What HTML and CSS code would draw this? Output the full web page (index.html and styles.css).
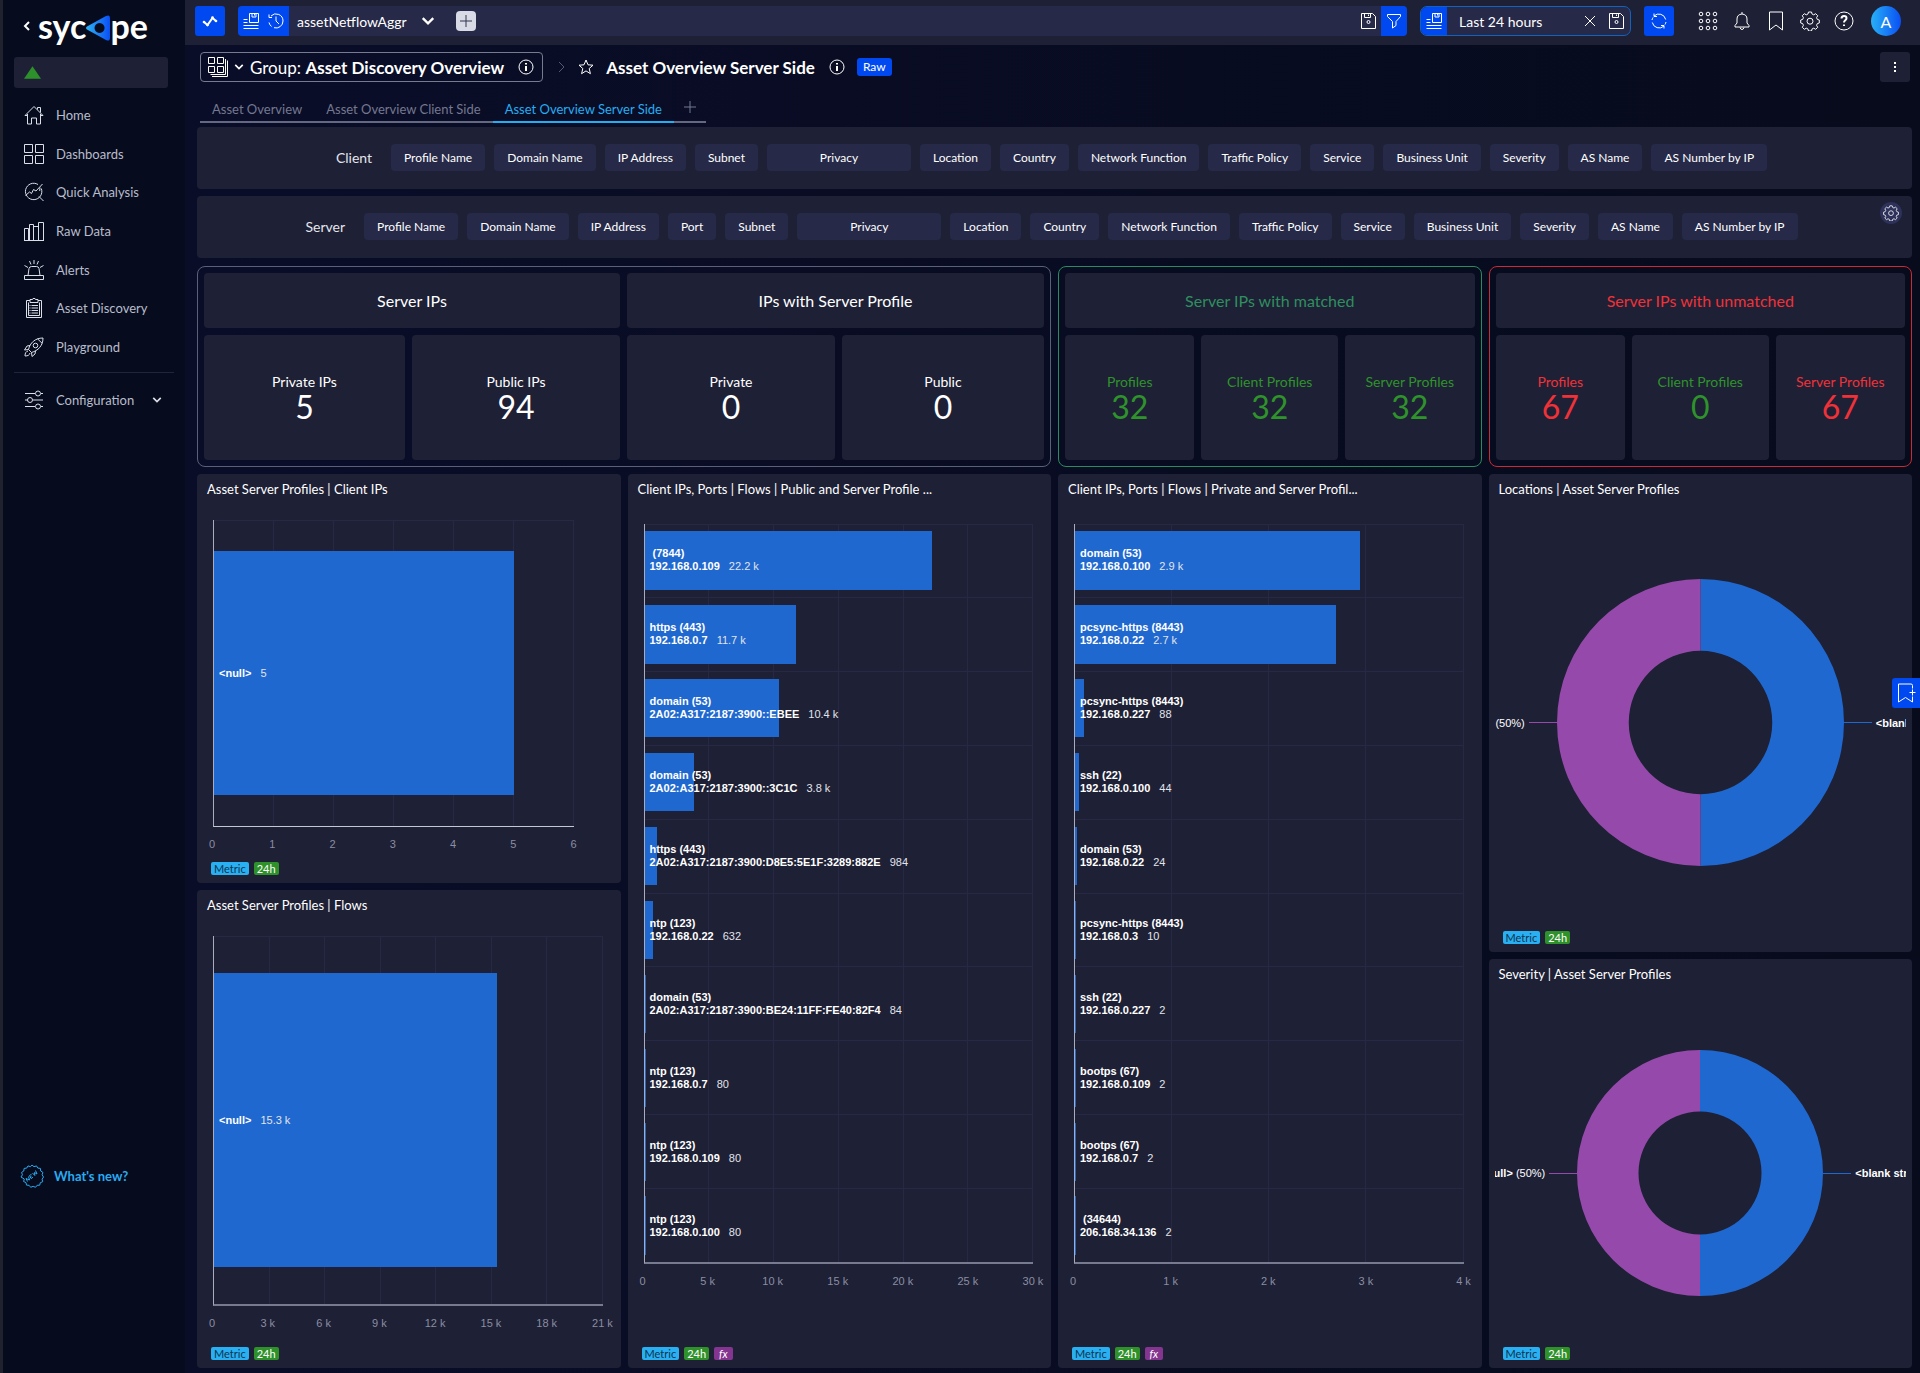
FILE: index.html
```html
<!DOCTYPE html>
<html lang="en">
<head>
<meta charset="UTF-8">
<meta name="viewport" content="width=device-width, initial-scale=1.0">
<title>Asset Overview Server Side</title>
<link rel="stylesheet" href="styles.css">
</head>
<body>

<!-- icon sprite -->
<svg class="sprite" aria-hidden="true">
    <symbol id="i-home" viewBox="0 0 20 20"><path d="M1 10.5 10 1.5l9 9M1 10.5h2.5M19 10.5h-2.5M3.5 9v10h4v-6h5v6h4V9M13.5 4.500V2.500h3v5"/></symbol>
    <symbol id="i-dash" viewBox="0 0 20 20"><path d="M.5.5h8v8h-8zM11.500.5h8v8h-8zM.5 11.500h8v8h-8zM11.500 11.500h8v8h-8z"/></symbol>
    <symbol id="i-analysis" viewBox="0 0 20 20"><path d="M17.300 6.500a8.200 8.200 0 1 1-3.300-4M15 14.500l4.500 4.500M1.500 13.500l4-3.500 2 1.500 2-4 2.500 1.500L18.500 2M16 5.500l-.3 3.500"/></symbol>
    <symbol id="i-raw" viewBox="0 0 20 20"><path d="M0 19.500h20M.5 19V7.500h4V19M5.500 19V3.500h4V19M9.500 5.500h5V19M14.500 19V1.500h5V19"/></symbol>
    <symbol id="i-alert" viewBox="0 0 20 20"><path d="M.5 15.500h19v4H.5zM4 15.500l1-7q.5-2 2.500-2h5q2 0 2.500 2l1 7M10 0v4M5.500 1l1.500 3.500M14.500 1 13 4.500M.5 5.500 4 7.500M19.500 5.500 16 7.500"/></symbol>
    <symbol id="i-clip" viewBox="0 0 20 20"><path d="M6 2.500H2.500v17h15v-17H14M6 1.500h2.500L9 .5h2l.5 1H14v3H6zM4.500 4.500v13h11v-13M7.500 7.500h6.500M7.500 10h6.500M7.500 12.500h6.500M7.500 15h6.500M5.500 7.500h1M5.500 10h1M5.500 12.500h1M5.500 15h1"/></symbol>
    <symbol id="i-rocket" viewBox="0 0 20 20"><path d="M4.500 12.500C6 6 11 1 19 1c0 8-5 12.500-11.500 14.500zM13.500 1.800l4.800 4.700M6 8.500 3 9l-2.500 4 4-.5M11.500 14l-.5 3-3 2.500-.5-4M4 14c-2 .5-3 2-3 5 3 0 4.500-1 5-3"/><circle cx="11.500" cy="8.500" r="2.300"/></symbol>
    <symbol id="i-sliders" viewBox="0 0 20 20"><path d="M1 3.500h10M17 3.500h2M1 10h2.500M9 10h10M1 16.500h10M17 16.500h2"/><circle cx="14" cy="3.500" r="2.500"/><circle cx="6" cy="10" r="2.500"/><circle cx="14" cy="16.500" r="2.500"/></symbol>
    <symbol id="i-down" viewBox="0 0 12 12"><path d="M1.500 3.500 6 8l4.500-4.500"/></symbol>
    <symbol id="i-left" viewBox="0 0 12 12"><path d="M8 2 4 6l4 4"/></symbol>
    <symbol id="i-right" viewBox="0 0 12 12"><path d="m4 1 5 5-5 5"/></symbol>
    <symbol id="i-spark" viewBox="0 0 16 16"><path d="m2 9 3.500 3L10.500 5l3.500 3"/><circle class="dot" cx="2" cy="9" r="1.300"/><circle class="dot" cx="5.500" cy="12" r="1.300"/><circle class="dot" cx="10.500" cy="4.500" r="1.300"/><circle class="dot" cx="14" cy="8" r="1.300"/></symbol>
    <symbol id="i-saved" viewBox="0 0 16 16"><path d="M6.500.5h9v9h-9zM9 .5v3.500h4V.5M11.500 1v1.500M.5 6.500h4M.5 9.500h4M.5 12.500h15M.5 15.500h15"/></symbol>
    <symbol id="i-history" viewBox="0 0 16 16"><path d="M3 3a7 7 0 0 1 12 5 7 7 0 0 1-9 6.700M1 9.500A7 7 0 0 0 3.500 13.500M1 1.500v3h3M8 3.500V8l3 3"/></symbol>
    <symbol id="i-disk" viewBox="0 0 16 16"><path d="M1.500.5h11l3 3v12h-14zM4.500.5v4h6v-4M8.500 1.500v1.500"/><circle cx="8.500" cy="9" r="1.500"/></symbol>
    <symbol id="i-filter" viewBox="0 0 16 16"><path d="M1.500 1.500h13v2L10 8.500v4L6.500 15V8.500l-5-5z"/></symbol>
    <symbol id="i-close" viewBox="0 0 12 12"><path d="m1 1 10 10M11 1 1 11"/></symbol>
    <symbol id="i-refresh" viewBox="0 0 16 16"><path d="M3 3a7 7 0 0 1 11.700 3.500M13 13A7 7 0 0 1 1.300 9.500M1 7a7 7 0 0 1 1-2.500M15 9a7 7 0 0 1-1 2.500M3 .5V3.500h3M13 15.500v-3h-3"/></symbol>
    <symbol id="i-apps" viewBox="0 0 20 20"><circle cx="3" cy="3" r="1.800"/><circle cx="10" cy="3" r="1.800"/><circle cx="17" cy="3" r="1.800"/><circle cx="3" cy="10" r="1.800"/><circle cx="10" cy="10" r="1.800"/><circle cx="17" cy="10" r="1.800"/><circle cx="3" cy="17" r="1.800"/><circle cx="10" cy="17" r="1.800"/><circle cx="17" cy="17" r="1.800"/></symbol>
    <symbol id="i-bell" viewBox="0 0 20 20"><path d="M3 16h14v-1.500l-2-2.500V8q0-4.500-5-5-5 .5-5 5v4l-2 2.500zM10 3V1M8 16.500q.5 2 2 2t2-2"/></symbol>
    <symbol id="i-mark" viewBox="0 0 20 20"><path d="M3.500 1h13v18L10 14l-6.500 5z"/></symbol>
    <symbol id="i-markplus" viewBox="0 0 20 20"><path d="M16.500 5.500V2.500q0-1.500-1.500-1.500H2.500v18l7-4.500 7 4.500v-5.500M16.500 6.500v6M13.500 9.500h6"/></symbol>
    <symbol id="i-gear" viewBox="0 0 20 20"><path d="M8.500 1h3l.6 2.100 1.600.7 2-1.100 2 2-1.100 2 .7 1.700 2 .6v3l-2 .6-.7 1.700 1.100 2-2 2-2-1.100-1.600.7-.6 2.100h-3l-.6-2.100-1.600-.7-2 1.100-2-2 1.100-2-.7-1.700-2-.6V9l2-.6.7-1.700-1.100-2 2-2 2 1.100 1.600-.7z"/><circle cx="10" cy="10.200" r="3"/></symbol>
    <symbol id="i-help" viewBox="0 0 20 20"><circle cx="10" cy="10" r="9"/><path class="thick" d="M7.500 7.500q0-2.500 2.500-2.500t2.500 2.300c0 2-2.500 2-2.500 4.200M10 13.500V15"/></symbol>
    <symbol id="i-info" viewBox="0 0 16 16"><circle cx="8" cy="8" r="7"/><path class="thick" d="M8 7v5M8 4v1.500"/></symbol>
    <symbol id="i-star" viewBox="0 0 16 16"><path d="m8 1 2 4.800 5 .4-3.800 3.300 1.200 5.200L8 11.900l-4.400 2.800 1.200-5.200L1 6.200l5-.4z"/></symbol>
    <symbol id="i-group" viewBox="0 0 20 20"><path d="M.5.5h6v6h-6zM9.500.5h6v6h-6zM.5 9.500h6v6h-6zM9.500 9.500h6v6h-6zM17.500 2v15.500H2.500M19.500 3.500v16H4"/></symbol>
    <symbol id="i-plus" viewBox="0 0 12 12"><path d="M6 0v12M0 6h12"/></symbol>
    <symbol id="i-new" viewBox="0 0 24 24"><path d="m12 1 2 1.700 2.500-.8 1.300 2.200 2.600.3.300 2.600 2.200 1.400-.8 2.400L23.500 13l-1.400 2.200.6 2.500-2.400 1-.6 2.500-2.600.1-1.600 2-2.400-1-2.400 1-1.600-2-2.600-.2-.5-2.500-2.400-1.100.7-2.500L1 13l1.400-2.200-.8-2.400 2.200-1.400.3-2.600 2.600-.3L8 1.900l2.500.8z"/><path d="m7.500 17.500-1.500-3 3.500 1.500-1-3.500M11 14.500l-1.500-3 2-1.200M10.300 13l1.200-.8M11 14.500l2-1.200M12.500 9l2.300 2.500-.3-3 2.500 1.500-1.500-3.500"/></symbol>
</svg>

<div class="app">
    <aside class="sidebar">
        <div class="brand">
            <button class="plain" aria-label="Collapse menu"><svg class="icon s12 bold"><use href="#i-left"/></svg></button>
            <a class="logo" href="#" aria-label="sycope">
                <span>syc</span>
                <svg class="logo-mark" viewBox="0 0 24 26">
                    <defs><linearGradient id="brandFill" x1="0" x2="1"><stop offset="0" stop-color="#2cb4f5"/><stop offset="1" stop-color="#0a4ff5"/></linearGradient></defs>
                    <path fill="url(#brandFill)" fill-rule="evenodd" d="M1 11.500 20 1q4-2 4 2.500v19q0 4.500-4 2.500L1 14.500q-2-1.500 0-3zM13.500 8a5 5 0 1 0 .1 0z"/>
                </svg>
                <span>pe</span>
            </a>
        </div>
        <div class="status"><svg viewBox="0 0 18 13"><path d="M9 0l9 13H0z"/></svg></div>
        <nav class="menu primary">
            <a href="#"><svg class="icon s20"><use href="#i-home"/></svg>Home</a>
            <a href="#"><svg class="icon s20"><use href="#i-dash"/></svg>Dashboards</a>
            <a href="#"><svg class="icon s20"><use href="#i-analysis"/></svg>Quick Analysis</a>
            <a href="#"><svg class="icon s20"><use href="#i-raw"/></svg>Raw Data</a>
            <a href="#"><svg class="icon s20"><use href="#i-alert"/></svg>Alerts</a>
            <a href="#"><svg class="icon s20"><use href="#i-clip"/></svg>Asset Discovery</a>
            <a href="#"><svg class="icon s20"><use href="#i-rocket"/></svg>Playground</a>
        </nav>
        <nav class="menu config">
            <a href="#"><svg class="icon s20"><use href="#i-sliders"/></svg>Configuration<svg class="icon s10 bold arrow"><use href="#i-down"/></svg></a>
        </nav>
        <a class="whats-new" href="#"><svg class="icon s24"><use href="#i-new"/></svg>What's new?</a>
    </aside>

    <div class="main">
        <header class="topbar">
            <button class="square" aria-label="Activity"><svg class="icon s16 bold"><use href="#i-spark"/></svg></button>
            <div class="search">
                <div class="search-icons">
                    <button class="plain" aria-label="Saved filters"><svg class="icon s16"><use href="#i-saved"/></svg></button>
                    <button class="plain" aria-label="History"><svg class="icon s16"><use href="#i-history"/></svg></button>
                </div>
                <label class="source">
                    <select aria-label="Data source"><option>assetNetflowAggr</option></select>
                    <svg class="icon s14 bold"><use href="#i-down"/></svg>
                </label>
                <button class="add-filter" aria-label="Add filter"><svg class="icon s12"><use href="#i-plus"/></svg></button>
                <button class="plain save" aria-label="Save filter"><svg class="icon s16"><use href="#i-disk"/></svg></button>
                <button class="filter" aria-label="Filter"><svg class="icon s16"><use href="#i-filter"/></svg></button>
            </div>
            <div class="time">
                <button class="time-saved" aria-label="Saved ranges"><svg class="icon s16"><use href="#i-saved"/></svg></button>
                <input type="text" aria-label="Time range" value="Last 24 hours">
                <button class="plain" aria-label="Clear"><svg class="icon s12"><use href="#i-close"/></svg></button>
                <button class="plain" aria-label="Save range"><svg class="icon s16"><use href="#i-disk"/></svg></button>
            </div>
            <button class="square" aria-label="Refresh"><svg class="icon s16"><use href="#i-refresh"/></svg></button>
            <div class="tools">
                <button class="plain" aria-label="Apps"><svg class="icon s20"><use href="#i-apps"/></svg></button>
                <button class="plain" aria-label="Notifications"><svg class="icon s20"><use href="#i-bell"/></svg></button>
                <button class="plain" aria-label="Bookmarks"><svg class="icon s20"><use href="#i-mark"/></svg></button>
                <button class="plain" aria-label="Settings"><svg class="icon s20"><use href="#i-gear"/></svg></button>
                <button class="plain" aria-label="Help"><svg class="icon s20"><use href="#i-help"/></svg></button>
            </div>
            <button class="avatar">A</button>
        </header>

        <main class="content">
            <div class="heading">
                <button class="group">
                    <svg class="icon s20"><use href="#i-group"/></svg>
                    <svg class="icon s10 bold"><use href="#i-down"/></svg>
                    <span>Group: <b>Asset Discovery Overview</b></span>
                    <svg class="icon s16"><use href="#i-info"/></svg>
                </button>
                <svg class="icon s12 sep"><use href="#i-right"/></svg>
                <svg class="icon s16"><use href="#i-star"/></svg>
                <h1>Asset Overview Server Side</h1>
                <svg class="icon s16"><use href="#i-info"/></svg>
                <span class="raw">Raw</span>
                <button class="more" aria-label="More"><i></i><i></i><i></i></button>
            </div>

            <nav class="tabs">
                <a href="#">Asset Overview</a>
                <a href="#">Asset Overview Client Side</a>
                <a href="#" class="active">Asset Overview Server Side</a>
                <button class="plain" aria-label="Add tab"><svg class="icon s12"><use href="#i-plus"/></svg></button>
            </nav>

            <section class="card filters">
                <h2>Client</h2>
                <button>Profile Name</button>
                <button>Domain Name</button>
                <button>IP Address</button>
                <button>Subnet</button>
                <button class="wide">Privacy</button>
                <button>Location</button>
                <button>Country</button>
                <button>Network Function</button>
                <button>Traffic Policy</button>
                <button>Service</button>
                <button>Business Unit</button>
                <button>Severity</button>
                <button>AS Name</button>
                <button>AS Number by IP</button>
            </section>

            <section class="card filters">
                <h2>Server</h2>
                <button>Profile Name</button>
                <button>Domain Name</button>
                <button>IP Address</button>
                <button>Port</button>
                <button>Subnet</button>
                <button class="wide">Privacy</button>
                <button>Location</button>
                <button>Country</button>
                <button>Network Function</button>
                <button>Traffic Policy</button>
                <button>Service</button>
                <button>Business Unit</button>
                <button>Severity</button>
                <button>AS Name</button>
                <button>AS Number by IP</button>
                <button class="settings" aria-label="Panel settings"><svg class="icon s16"><use href="#i-gear"/></svg></button>
            </section>

            <div class="kpis">
                <section class="kpi-group four">
                    <h2 class="card span2">Server IPs</h2>
                    <h2 class="card span2">IPs with Server Profile</h2>
                    <div class="card kpi"><span>Private IPs</span><strong>5</strong></div>
                    <div class="card kpi"><span>Public IPs</span><strong>94</strong></div>
                    <div class="card kpi"><span>Private</span><strong>0</strong></div>
                    <div class="card kpi"><span>Public</span><strong>0</strong></div>
                </section>
                <section class="kpi-group three matched">
                    <h2 class="card">Server IPs with matched</h2>
                    <div class="card kpi good"><span>Profiles</span><strong>32</strong></div>
                    <div class="card kpi good"><span>Client Profiles</span><strong>32</strong></div>
                    <div class="card kpi good"><span>Server Profiles</span><strong>32</strong></div>
                </section>
                <section class="kpi-group three unmatched">
                    <h2 class="card">Server IPs with unmatched</h2>
                    <div class="card kpi bad"><span>Profiles</span><strong>67</strong></div>
                    <div class="card kpi good"><span>Client Profiles</span><strong>0</strong></div>
                    <div class="card kpi bad"><span>Server Profiles</span><strong>67</strong></div>
                </section>
            </div>

            <div class="charts">
                <div class="column short-first">
                    <section class="card chart">
                        <h3>Asset Server Profiles | Client IPs</h3>
                        <div class="plot narrow">
                            <div class="lines"><i></i><i></i><i></i><i></i><i></i><i></i></div>
                            <div class="row"><div class="bar" style="width: 83.33%"></div><p><b>&lt;null&gt;</b><span>5</span></p></div>
                        </div>
                        <div class="ticks narrow"><span>0</span><span>1</span><span>2</span><span>3</span><span>4</span><span>5</span><span>6</span></div>
                        <div class="badges"><span class="metric">Metric</span><span class="hours">24h</span></div>
                    </section>
                    <section class="card chart">
                        <h3>Asset Server Profiles | Flows</h3>
                        <div class="plot">
                            <div class="lines"><i></i><i></i><i></i><i></i><i></i><i></i><i></i></div>
                            <div class="row"><div class="bar" style="width: 72.8%"></div><p><b>&lt;null&gt;</b><span>15.3 k</span></p></div>
                        </div>
                        <div class="ticks"><span>0</span><span>3 k</span><span>6 k</span><span>9 k</span><span>12 k</span><span>15 k</span><span>18 k</span><span>21 k</span></div>
                        <div class="badges"><span class="metric">Metric</span><span class="hours">24h</span></div>
                    </section>
                </div>

                <section class="card chart tall">
                    <h3>Client IPs, Ports | Flows | Public and Server Profile ...</h3>
                    <div class="plot">
                        <div class="lines"><i></i><i></i><i></i><i></i><i></i><i></i></div>
                        <div class="row"><div class="bar" style="width: 74%"></div><p><b>&nbsp;(7844)<br>192.168.0.109</b><span>22.2 k</span></p></div>
                        <div class="row"><div class="bar" style="width: 39%"></div><p><b>https (443)<br>192.168.0.7</b><span>11.7 k</span></p></div>
                        <div class="row"><div class="bar" style="width: 34.7%"></div><p><b>domain (53)<br>2A02:A317:2187:3900::EBEE</b><span>10.4 k</span></p></div>
                        <div class="row"><div class="bar" style="width: 12.7%"></div><p><b>domain (53)<br>2A02:A317:2187:3900::3C1C</b><span>3.8 k</span></p></div>
                        <div class="row"><div class="bar" style="width: 3.3%"></div><p><b>https (443)<br>2A02:A317:2187:3900:D8E5:5E1F:3289:882E</b><span>984</span></p></div>
                        <div class="row"><div class="bar" style="width: 2.1%"></div><p><b>ntp (123)<br>192.168.0.22</b><span>632</span></p></div>
                        <div class="row"><div class="bar" style="width: 0.3%"></div><p><b>domain (53)<br>2A02:A317:2187:3900:BE24:11FF:FE40:82F4</b><span>84</span></p></div>
                        <div class="row"><div class="bar" style="width: 0.3%"></div><p><b>ntp (123)<br>192.168.0.7</b><span>80</span></p></div>
                        <div class="row"><div class="bar" style="width: 0.3%"></div><p><b>ntp (123)<br>192.168.0.109</b><span>80</span></p></div>
                        <div class="row"><div class="bar" style="width: 0.3%"></div><p><b>ntp (123)<br>192.168.0.100</b><span>80</span></p></div>
                    </div>
                    <div class="ticks"><span>0</span><span>5 k</span><span>10 k</span><span>15 k</span><span>20 k</span><span>25 k</span><span>30 k</span></div>
                    <div class="badges"><span class="metric">Metric</span><span class="hours">24h</span><span class="fx">fx</span></div>
                </section>

                <section class="card chart tall">
                    <h3>Client IPs, Ports | Flows | Private and Server Profil...</h3>
                    <div class="plot">
                        <div class="lines"><i></i><i></i><i></i><i></i></div>
                        <div class="row"><div class="bar" style="width: 73.3%"></div><p><b>domain (53)<br>192.168.0.100</b><span>2.9 k</span></p></div>
                        <div class="row"><div class="bar" style="width: 67.2%"></div><p><b>pcsync-https (8443)<br>192.168.0.22</b><span>2.7 k</span></p></div>
                        <div class="row"><div class="bar" style="width: 2.2%"></div><p><b>pcsync-https (8443)<br>192.168.0.227</b><span>88</span></p></div>
                        <div class="row"><div class="bar" style="width: 1.1%"></div><p><b>ssh (22)<br>192.168.0.100</b><span>44</span></p></div>
                        <div class="row"><div class="bar" style="width: 0.6%"></div><p><b>domain (53)<br>192.168.0.22</b><span>24</span></p></div>
                        <div class="row"><div class="bar" style="width: 0.3%"></div><p><b>pcsync-https (8443)<br>192.168.0.3</b><span>10</span></p></div>
                        <div class="row"><div class="bar" style="width: 0.05%"></div><p><b>ssh (22)<br>192.168.0.227</b><span>2</span></p></div>
                        <div class="row"><div class="bar" style="width: 0.05%"></div><p><b>bootps (67)<br>192.168.0.109</b><span>2</span></p></div>
                        <div class="row"><div class="bar" style="width: 0.05%"></div><p><b>bootps (67)<br>192.168.0.7</b><span>2</span></p></div>
                        <div class="row"><div class="bar" style="width: 0.05%"></div><p><b>&nbsp;(34644)<br>206.168.34.136</b><span>2</span></p></div>
                    </div>
                    <div class="ticks"><span>0</span><span>1 k</span><span>2 k</span><span>3 k</span><span>4 k</span></div>
                    <div class="badges"><span class="metric">Metric</span><span class="hours">24h</span><span class="fx">fx</span></div>
                </section>

                <div class="column short-last">
                    <section class="card chart">
                        <h3>Locations | Asset Server Profiles</h3>
                        <div class="pie">
                            <p class="pie-left"><span><b>&lt;null&gt;</b> (50%)</span></p>
                            <svg class="donut large" viewBox="-100 -100 200 200"><path class="blue" d="M0-100a100 100 0 0 1 0 200V50a50 50 0 0 0 0-100z"/><path class="purple" d="M0-100a100 100 0 0 0 0 200V50a50 50 0 0 1 0-100z"/></svg>
                            <p class="pie-right"><span><b>&lt;blank string&gt;</b> (50%)</span></p>
                        </div>
                        <div class="badges"><span class="metric">Metric</span><span class="hours">24h</span></div>
                    </section>
                    <section class="card chart">
                        <h3>Severity | Asset Server Profiles</h3>
                        <div class="pie">
                            <p class="pie-left"><span><b>&lt;null&gt;</b> (50%)</span></p>
                            <svg class="donut" viewBox="-100 -100 200 200"><path class="blue" d="M0-100a100 100 0 0 1 0 200V50a50 50 0 0 0 0-100z"/><path class="purple" d="M0-100a100 100 0 0 0 0 200V50a50 50 0 0 1 0-100z"/></svg>
                            <p class="pie-right"><span><b>&lt;blank string&gt;</b> (50%)</span></p>
                        </div>
                        <div class="badges"><span class="metric">Metric</span><span class="hours">24h</span></div>
                    </section>
                </div>
            </div>
        </main>
    </div>
</div>

<button class="bookmark" aria-label="Add bookmark"><svg class="icon s20"><use href="#i-markplus"/></svg></button>

</body>
</html>
```
FILE: styles.css
```css
* {
    box-sizing: border-box;
}
body {
    margin: 0;
    background: #080c20;
    color: #fff;
    font-family: Lato, "Open Sans", sans-serif;
    font-size: 14px;
}
h1, h2, h3, p {
    margin: 0;
    font-weight: normal;
}
a {
    color: inherit;
    text-decoration: none;
}
button, input, select {
    border: none;
    margin: 0;
    padding: 0;
    background: none;
    color: inherit;
    font: inherit;
}
button {
    display: flex;
    align-items: center;
    justify-content: center;
    cursor: pointer;
}

/* icons */
.sprite {
    display: none;
}
.icon {
    flex: none;
    fill: none;
    stroke: currentColor;
    stroke-width: 1;
}
.bold {
    stroke-width: 2;
}
.thick {
    stroke-width: 2;
}
.dot {
    fill: currentColor;
    stroke: none;
}
.s10 { width: 10px; height: 10px; }
.s12 { width: 12px; height: 12px; }
.s14 { width: 14px; height: 14px; }
.s16 { width: 16px; height: 16px; }
.s20 { width: 20px; height: 20px; }
.s24 { width: 24px; height: 24px; }

.app {
    display: flex;
    min-height: 100vh;
    border-left: 3px solid #20232e;
}

/* sidebar */
.sidebar {
    flex: none;
    display: flex;
    flex-direction: column;
    width: 182px;
    padding: 0 11px 185px;
    background: #060c1e;
}
.brand {
    display: flex;
    align-items: center;
    height: 57px;
    padding: 0 0 6px 7px;
    gap: 5px;
}
.logo {
    display: flex;
    align-items: center;
    font-size: 34px;
    line-height: 40px;
    font-weight: bold;
}
.logo-mark {
    width: 24px;
    height: 26px;
    margin-top: 4px;
}
.status {
    height: 31px;
    width: 154px;
    padding: 9px 10px;
    border-radius: 3px;
    background: #1e2035;
}
.status svg {
    display: block;
    width: 17px;
    height: 13px;
    fill: #2e902b;
}
.menu {
    display: flex;
    flex-direction: column;
    padding: 8px 0 6px 10px;
    font-size: 13px;
}
.menu a {
    flex: 1;
    display: flex;
    align-items: center;
    gap: 12px;
    min-height: 38px;
    color: #b9bccb;
}
.menu .icon {
    color: #dcdee8;
}
.primary {
    height: 284px;
}
.config {
    border-top: 1px solid #20243c;
}
.config .arrow {
    margin-left: 6px;
}
.whats-new {
    display: flex;
    align-items: center;
    gap: 10px;
    margin-top: auto;
    padding-left: 6px;
    color: #2aaaf0;
    font-size: 13px;
    font-weight: bold;
}

/* top bar */
.main {
    flex: 1;
    min-width: 0;
    display: flex;
    flex-direction: column;
    background: linear-gradient(to right, #0a0d28, #070b1c);
}
.topbar {
    display: flex;
    align-items: center;
    height: 45px;
    padding: 0 19px 3px 10px;
    background: #1e2035;
}
.square {
    flex: none;
    width: 30px;
    height: 30px;
    border-radius: 3px;
    background: #0049f0;
}
.search {
    flex: 1;
    display: flex;
    align-items: center;
    height: 30px;
    margin: 0 13px;
    border-radius: 4px;
    background: #262947;
    overflow: hidden;
}
.search-icons {
    display: flex;
    justify-content: center;
    gap: 9px;
    width: 51px;
    height: 30px;
    background: #0049f0;
}
.source {
    display: flex;
    align-items: center;
    gap: 14px;
    padding-left: 8px;
}
.source select {
    appearance: none;
}
.add-filter {
    width: 20px;
    height: 20px;
    margin-left: 21px;
    border-radius: 4px;
    background: #d8dae5;
    color: #33364c;
}
.save {
    margin-left: auto;
    padding: 0 5px;
}
.filter {
    width: 26px;
    height: 30px;
    background: #0049f0;
}
.time {
    display: flex;
    align-items: center;
    gap: 12px;
    width: 211px;
    height: 30px;
    margin-right: 13px;
    padding-right: 6px;
    border: 1px solid #1263bd;
    border-radius: 7px;
    background: #262947;
    overflow: hidden;
}
.time-saved {
    width: 26px;
    height: 30px;
    background: #0049f0;
}
.time input {
    flex: 1;
    min-width: 0;
}
.tools {
    display: flex;
    align-items: center;
    gap: 14px;
    margin: 0 17px 0 24px;
}
.avatar {
    width: 30px;
    height: 30px;
    border-radius: 50%;
    background: linear-gradient(to right, #28b0f5, #0a50f5);
    font-size: 16px;
}

/* heading */
.content {
    flex: 1;
    display: flex;
    flex-direction: column;
    gap: 7px;
    padding: 7px 8px 5px 12px;
}
.heading {
    display: flex;
    align-items: center;
    padding: 0 2px 0 3px;
    font-size: 17px;
}
.group {
    gap: 6px;
    height: 30px;
    padding: 0 8px 0 7px;
    border: 1px solid #777b90;
    border-radius: 4px;
}
.group .s16 {
    margin-left: 8px;
}
.sep {
    margin: 0 11px 0 12px;
    color: #565a70;
}
.heading h1 {
    margin: 0 14px 0 12px;
    font-size: 17px;
    font-weight: bold;
}
.raw {
    margin-left: 12px;
    padding: 0 6px;
    border-radius: 3px;
    background: #0049f0;
    font-size: 12px;
    line-height: 18px;
}
.more {
    flex-direction: column;
    gap: 2px;
    width: 30px;
    height: 30px;
    margin-left: auto;
    border-radius: 3px;
    background: #1e2035;
}
.more i {
    width: 2px;
    height: 2px;
    background: #fff;
}
.tabs {
    align-self: flex-start;
    display: flex;
    height: 34px;
    margin: 0 0 -3px 3px;
    border-bottom: 2px solid #646880;
    color: #747890;
    font-size: 13px;
}
.tabs a {
    height: 34px;
    padding: 0 12px;
    line-height: 40px;
}
.tabs .active {
    border-bottom: 2px solid #24aef2;
    color: #24aef2;
}
.tabs button {
    padding: 4px 10px 0;
}

/* cards */
.card {
    border-radius: 4px;
    background: #1e2035;
}
.filters {
    position: relative;
    display: flex;
    align-items: center;
    justify-content: center;
    gap: 9px;
    height: 62px;
    padding: 0 6px 2px 0;
}
.filters h2 {
    margin-right: 10px;
    font-size: 14px;
    color: #e4e5ec;
}
.filters button {
    height: 27px;
    padding: 0 13px;
    border-radius: 4px;
    background: #262947;
    font-size: 12px;
    white-space: nowrap;
}
.filters .wide {
    width: 144px;
}
.filters .settings {
    position: absolute;
    top: 6px;
    right: 10px;
    width: 22px;
    height: 22px;
    padding: 0;
    border-radius: 50%;
    background: #2e3159;
}

/* counters */
.kpis, .charts {
    display: grid;
    grid-template-columns: repeat(4, minmax(0, 1fr));
    gap: 7px;
}
.kpis {
    margin-top: 1px;
}
.kpi-group {
    display: grid;
    grid-template-rows: 55px 125px;
    gap: 7px;
    padding: 6px;
    border: 1px solid #5b6078;
    border-radius: 8px;
}
.kpi-group h2 {
    display: flex;
    align-items: center;
    justify-content: center;
    font-size: 16px;
}
.four {
    grid-column: span 2;
    grid-template-columns: 200fr 207fr 207fr 201fr;
}
.span2 {
    grid-column: span 2;
}
.three {
    grid-template-columns: 129fr 136fr 129fr;
}
.three h2 {
    grid-column: span 3;
}
.kpi {
    display: flex;
    flex-direction: column;
    align-items: center;
    justify-content: center;
    padding-top: 2px;
}
.kpi span {
    line-height: 16px;
}
.kpi strong {
    font-size: 32px;
    line-height: 34px;
    font-weight: normal;
}
.matched {
    border-color: #2c8a5c;
}
.matched h2 {
    color: #2f8f5f;
}
.unmatched {
    border-color: #c92a35;
}
.unmatched h2, .bad {
    color: #f03238;
}
.good {
    color: #2f932b;
}

/* charts */
.charts {
    flex: 1;
}
.column {
    display: grid;
    gap: 7px;
}
.short-first {
    grid-template-rows: 409fr 478fr;
}
.short-last {
    grid-template-rows: 478fr 409fr;
}
.chart {
    display: flex;
    flex-direction: column;
    padding: 0 0 8px;
    font-family: "Liberation Sans", Arial, sans-serif;
    font-size: 11px;
}
.chart h3 {
    padding: 0 10px;
    font-family: Lato, "Open Sans", sans-serif;
    font-size: 13px;
    line-height: 30px;
    white-space: nowrap;
    overflow: hidden;
}
.plot {
    position: relative;
    flex: 1;
    display: flex;
    flex-direction: column;
    margin: 16px 18px 0 16px;
    border-left: 1px solid #a9acbd;
    border-bottom: 2px solid #777b8f;
}
.ticks {
    display: flex;
    justify-content: space-between;
    height: 41px;
    padding-top: 10px;
    margin: 0 18px 0 15px;
    line-height: 14px;
    color: #8a8ea3;
}
.ticks span {
    display: flex;
    justify-content: center;
    width: 0;
    white-space: nowrap;
}
.narrow {
    margin-right: 47px;
}
.plot.narrow {
    border-bottom: 1px solid #c4c6d4;
}
.ticks.narrow {
    height: 35px;
}
.tall .plot {
    margin-top: 20px;
}
.tall .ticks {
    height: 83px;
}
.lines {
    position: absolute;
    inset: 0;
    display: flex;
    border-top: 1px solid #262846;
}
.lines i {
    flex: 1;
    border-right: 1px solid #262846;
}
.row {
    position: relative;
    flex: 1;
    display: flex;
    align-items: center;
}
.row + .row {
    border-top: 1px solid #262846;
}
.bar {
    height: 80%;
    background: #1f68cf;
}
.row p {
    position: absolute;
    left: 5px;
    line-height: 13px;
    white-space: nowrap;
}
.row p span {
    margin-left: 9px;
    color: #e2e4ec;
}
.badges {
    display: flex;
    gap: 5px;
    padding-left: 14px;
    font-family: Lato, "Open Sans", sans-serif;
    line-height: 13px;
}
.badges span {
    padding: 0 3px;
    border-radius: 2px;
}
.metric {
    background: #29b0f2;
    color: #0d3350;
}
.hours {
    background: #2f9129;
}
.badges .fx {
    padding: 0 5px;
    background: #84358f;
    font-style: italic;
}

.pie {
    flex: 1;
    display: grid;
    grid-template-columns: minmax(0, 1fr) auto minmax(0, 1fr);
    align-items: center;
    padding: 10px 6px 0;
}
.donut {
    width: 246px;
    height: 246px;
}
.large {
    width: 287px;
    height: 287px;
}
.blue {
    fill: #1f68cf;
}
.purple {
    fill: #9549aa;
}
.pie p {
    display: flex;
    align-items: center;
    gap: 4px;
    overflow: hidden;
    white-space: nowrap;
}
.pie-left {
    justify-content: flex-end;
}
.pie-left::after, .pie-right::before {
    content: "";
    flex: none;
    width: 28px;
    height: 1px;
    background: #9549aa;
}
.pie-right::before {
    background: #1f68cf;
}

/* stays at the window edge, over the charts */
.bookmark {
    position: fixed;
    top: 678px;
    right: 0;
    width: 28px;
    height: 30px;
    border-radius: 3px 0 0 3px;
    background: #0049f0;
}
```
